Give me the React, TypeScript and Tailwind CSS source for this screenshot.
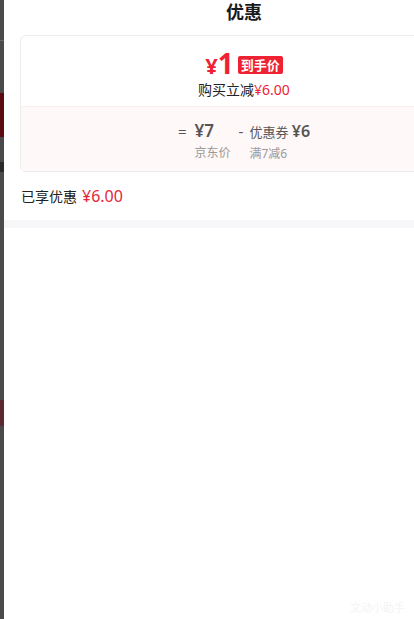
import React from "react";

const font = { fontFamily: '"Noto Sans", "Noto Sans CJK SC", sans-serif' };

export default function App() {
  return (
    <div className="flex w-[414px] h-[619px] overflow-hidden bg-white" style={font}>
      {/* dimmed page behind the sheet */}
      <div className="w-[4px] shrink-0 flex flex-col bg-[#4a4a4a]">
        <div className="h-[40px]" />
        <div className="h-[1px] bg-[#6a6a6a]" />
        <div className="h-[52px]" />
        <div className="h-[44px] bg-[#5a0b12]" />
        <div className="h-[25px]" />
        <div className="h-[10px] bg-[#2a2a2a]" />
        <div className="h-[228px]" />
        <div className="h-[26px] bg-[#5a2a30]" />
      </div>

      {/* sheet */}
      <div className="w-[480px] shrink-0 flex flex-col bg-white">
        <div className="h-[28px] flex items-start justify-center -mt-[1px]">
          <span className="text-[18px] leading-[26px] font-bold text-[#1a1a1a]">优惠</span>
        </div>

        <div className="mx-[16px] mt-[8px] rounded-[6px] border border-[#ececec] overflow-hidden">
          <div className="h-[70px] flex flex-col items-center pt-[14px]">
            <div className="flex items-center gap-[4px] h-[28px]">
              <span className="text-[#ee2233] font-bold leading-[28px] flex items-baseline">
                <span className="text-[22px] leading-[28px]">¥</span>
                <span className="text-[28px] leading-[28px]">1</span>
              </span>
              <span className="bg-[#ee2233] text-white text-[13px] font-bold leading-[18px] px-[3px] rounded-[2px] mt-[2px]">
                到手价
              </span>
            </div>
            <div className="text-[14px] leading-[20px] text-[#222] mt-[2px]">
              购买立减<span className="text-[#ee2233]">¥6.00</span>
            </div>
          </div>
          <div className="h-[65px] bg-[#fff8f8] border-t border-[#fbeeee] flex justify-center pt-[12px] gap-[8px]">
            <div className="flex items-start gap-[8px]">
              <span className="text-[15px] leading-[24px] text-[#555]">=</span>
              <div className="flex flex-col">
                <span className="text-[17px] leading-[24px] font-semibold text-[#555]">¥7</span>
                <span className="text-[12px] leading-[18px] text-[#999] mt-[1px]">京东价</span>
              </div>
            </div>
            <div className="flex items-start gap-[6px]">
              <span className="text-[15px] leading-[24px] text-[#555]">-</span>
              <div className="flex flex-col">
                <span className="text-[#555] leading-[24px]">
                  <span className="text-[13px]">优惠券 </span>
                  <span className="text-[16px] font-semibold">¥6</span>
                </span>
                <span className="text-[12px] leading-[18px] text-[#999] mt-[1px]">满7减6</span>
              </div>
            </div>
          </div>
        </div>

        <div className="px-[17px] h-[48px] flex items-center">
          <span className="text-[14px] text-[#222]">已享优惠</span>
          <span className="text-[16px] text-[#e4263a] ml-[5px]">¥6.00</span>
        </div>
        <div className="h-[8px] bg-[#f7f7f9]" />
        <div className="flex-1 relative">
          <span className="absolute left-[346px] top-[372px] text-[11px] text-[#f4f4f4]">文动小助手</span>
        </div>
      </div>
    </div>
  );
}
